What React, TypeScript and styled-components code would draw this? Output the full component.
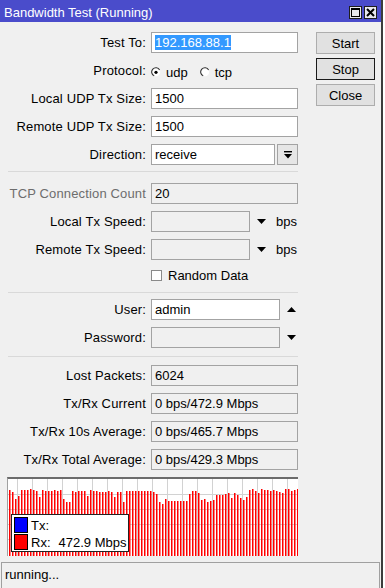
import React from 'react'
import styled, { createGlobalStyle } from 'styled-components'

const GlobalStyle = createGlobalStyle`
  html, body {
    margin: 0;
    padding: 0;
    background: #ffffff;
  }
  body {
    font-family: "Liberation Sans", Arial, sans-serif;
    font-size: 13px;
    color: #000;
  }
`

const Window = styled.div`
  width: 381px;
  height: 588px;
  border-right: 2px solid #3c3c3c;
  background: #f0f0f0;
  display: flex;
  flex-direction: column;
  overflow: hidden;
`

const TitleBar = styled.div`
  height: 22px;
  flex: none;
  background: #4a4ccb;
  color: #fff;
  display: flex;
  align-items: center;
  justify-content: space-between;
  padding: 0 4px 0 4px;
`

const Title = styled.span`
  font-size: 13px;
  line-height: 15px;
  padding-top: 3px;
`

const TitleButtons = styled.div`
  display: flex;
  gap: 2px;
  padding-top: 2px;
`

const TitleButton = styled.div`
  width: 13px;
  height: 13px;
  box-sizing: border-box;
  border: 1px solid #1e1e1e;
  background: #e8e8ee;
  display: flex;
  align-items: center;
  justify-content: center;
`

const Main = styled.div`
  display: flex;
  padding-top: 10px;
  gap: 18px;
`

const Form = styled.div`
  width: 298px;
  display: flex;
  flex-direction: column;
`

const Section = styled.div`
  display: flex;
  flex-direction: column;
  gap: 7px;
`

const Row = styled.div<{ $h?: number }>`
  display: grid;
  grid-template-columns: 146px 1fr;
  column-gap: 5px;
  align-items: center;
  height: ${p => p.$h ?? 21}px;
`

const Label = styled.span<{ $disabled?: boolean }>`
  text-align: right;
  white-space: nowrap;
  letter-spacing: 0.15px;
  color: ${p => (p.$disabled ? '#6d6d6d' : '#000')};
`

const Control = styled.div`
  display: flex;
  align-items: center;
  height: 100%;
`

const Field = styled.div<{ $w?: number; $ro?: boolean }>`
  box-sizing: border-box;
  width: ${p => p.$w ?? 147}px;
  height: 21px;
  border: 1px solid #a3a3a3;
  background: ${p => (p.$ro ? '#f0f0f0' : '#ffffff')};
  padding: 0 3px;
  line-height: 19px;
  white-space: nowrap;
  overflow: hidden;
`

const Selected = styled.span`
  background: #3399ff;
  color: #fff;
`

const DropButton = styled.div`
  box-sizing: border-box;
  width: 21px;
  height: 21px;
  margin-left: 2px;
  border: 1px solid #a3a3a3;
  background: #e6e6e6;
  display: flex;
  align-items: center;
  justify-content: center;
`

const Unit = styled.span`
  margin-left: 10px;
`

const RadioGroup = styled.div`
  display: flex;
  align-items: center;
  padding-top: 3px;
`

const RadioItem = styled.label`
  display: flex;
  align-items: center;
  gap: 5px;
  margin-right: 12px;
`

const CheckItem = styled.label`
  display: flex;
  align-items: center;
  gap: 6px;
`

const CheckBox = styled.span`
  box-sizing: border-box;
  width: 11px;
  height: 11px;
  border: 1px solid #8a8a8a;
  background: #fff;
`

const Separator = styled.div<{ $mt: number; $mb: number }>`
  height: 1px;
  background: #d9d9d9;
  margin: ${p => p.$mt}px 0 ${p => p.$mb}px 8px;
  width: 290px;
`

const GraphBox = styled.div`
  position: relative;
  margin: 7px 0 0 7px;
  width: 290px;
  height: 77px;
  border-left: 1px solid #a0a0a0;
  border-top: 2px solid #6b6b6b;
  background: #fff;
`

const Legend = styled.div`
  position: absolute;
  left: 3px;
  top: 35px;
  width: 118px;
  box-sizing: border-box;
  border: 1px solid #222;
  background: #fff;
  padding: 2px 2px 1px 2px;
  display: flex;
  flex-direction: column;
  gap: 1px;
`

const LegendRow = styled.div`
  display: flex;
  align-items: center;
  height: 16px;
  gap: 3px;
  font-size: 13px;
  white-space: nowrap;
`

const Swatch = styled.span<{ $color: string }>`
  box-sizing: border-box;
  flex: none;
  width: 14px;
  height: 16px;
  border: 1px solid #000;
  background: ${p => p.$color};
`

const LegendValue = styled.span`
  margin-left: 5px;
`

const Buttons = styled.div`
  display: flex;
  flex-direction: column;
  gap: 4px;
`

const Button = styled.div<{ $default?: boolean }>`
  box-sizing: border-box;
  width: 59px;
  height: 22px;
  border: 1px solid ${p => (p.$default ? '#1a1a1a' : '#adadad')};
  background: #e1e1e1;
  display: flex;
  align-items: center;
  justify-content: center;
`

const StatusBar = styled.div`
  margin: 6px 1px 0 1px;
  flex: 1;
  border: 1px solid #a0a0a0;
  border-bottom: none;
  padding: 4px 3px 0 3px;
`

const Caret = ({ up }: { up?: boolean }) => (
  <svg width="9" height="6" viewBox="0 0 9 6" style={{ marginLeft: 7 }}>
    <polygon points={up ? '0,5 9,5 4.5,0' : '0,0 9,0 4.5,5'} fill="#000" />
  </svg>
)

const Radio = ({ checked }: { checked?: boolean }) => (
  <svg width="10" height="10" viewBox="0 0 10 10">
    <circle cx="5" cy="5" r="4.2" fill="#fff" />
    <path d="M8.6 3 A4.2 4.2 0 1 0 3.2 8.8" fill="none" stroke="#333" strokeWidth="1.1" />
    {checked && <circle cx="5" cy="5.3" r="1.6" fill="#000" />}
  </svg>
)

const bars = [
  15, 17, 24, 21, 15, 15, 15, 14, 15, 16,
  22, 15, 16, 16, 16, 15, 16, 15, 24, 27,
  27, 16, 17, 16, 16, 16, 21, 15, 16, 16,
  17, 17, 17, 16, 17, 22, 17, 17, 27, 16,
  16, 16, 16, 16, 16, 16, 16, 16, 17, 19,
  27, 29, 24, 26, 26, 26, 26, 26, 26, 26,
  19, 16, 16, 18, 25, 24, 27, 26, 25, 20,
  20, 20, 19, 18, 23, 18, 20, 23, 25, 22,
  15, 14, 16, 18, 14, 15, 15, 16, 15, 16,
  17, 18, 14, 14, 16, 15, 14,
]

const Graph = () => (
  <svg width="290" height="77" viewBox="0 0 290 77">
    {Array.from({ length: 20 }).map((_, i) => (
      <line key={'v' + i} x1={9.5 + i * 15} y1="0" x2={9.5 + i * 15} y2="77" stroke="#d2d2d2" />
    ))}
    {[15.5, 30.5, 45.5, 60.5].map(y => (
      <line key={'h' + y} x1="0" y1={y} x2="290" y2={y} stroke="#d2d2d2" />
    ))}
    {bars.map((o, i) => (
      <rect key={i} x={1 + i * 3} y={o - 4} width="1.5" height={77 - (o - 4)} fill="#ff0000" />
    ))}
  </svg>
)

const App: React.FC = () => {
  return (
    <Window>
      <GlobalStyle />
      <TitleBar>
        <Title>Bandwidth Test (Running)</Title>
        <TitleButtons>
          <TitleButton>
            <svg width="9" height="9" viewBox="0 0 9 9">
              <rect x="0.5" y="0.5" width="8" height="8" fill="none" stroke="#000" />
              <line x1="0" y1="1.5" x2="9" y2="1.5" stroke="#000" />
            </svg>
          </TitleButton>
          <TitleButton>
            <svg width="9" height="9" viewBox="0 0 9 9">
              <path d="M1 1 L8 8 M8 1 L1 8" stroke="#000" strokeWidth="2" />
            </svg>
          </TitleButton>
        </TitleButtons>
      </TitleBar>

      <Main>
        <Form>
          <Section>
            <Row>
              <Label>Test To:</Label>
              <Control>
                <Field><Selected>192.168.88.1</Selected></Field>
              </Control>
            </Row>
            <Row>
              <Label>Protocol:</Label>
              <RadioGroup>
                <RadioItem><Radio checked />udp</RadioItem>
                <RadioItem><Radio />tcp</RadioItem>
              </RadioGroup>
            </Row>
            <Row>
              <Label>Local UDP Tx Size:</Label>
              <Control><Field>1500</Field></Control>
            </Row>
            <Row>
              <Label>Remote UDP Tx Size:</Label>
              <Control><Field>1500</Field></Control>
            </Row>
            <Row>
              <Label>Direction:</Label>
              <Control>
                <Field $w={124}>receive</Field>
                <DropButton>
                  <svg width="8" height="8" viewBox="0 0 8 8">
                    <rect x="0" y="0" width="8" height="1.4" fill="#000" />
                    <polygon points="0,3 8,3 4,7.5" fill="#000" />
                  </svg>
                </DropButton>
              </Control>
            </Row>
          </Section>

          <Separator $mt={6} $mb={11} />

          <Section>
            <Row>
              <Label $disabled>TCP Connection Count</Label>
              <Control><Field $ro>20</Field></Control>
            </Row>
            <Row>
              <Label>Local Tx Speed:</Label>
              <Control>
                <Field $w={99} $ro />
                <Caret />
                <Unit>bps</Unit>
              </Control>
            </Row>
            <Row>
              <Label>Remote Tx Speed:</Label>
              <Control>
                <Field $w={99} $ro />
                <Caret />
                <Unit>bps</Unit>
              </Control>
            </Row>
            <Row $h={16}>
              <span />
              <CheckItem><CheckBox />Random Data</CheckItem>
            </Row>
          </Section>

          <Separator $mt={9} $mb={6} />

          <Section>
            <Row>
              <Label>User:</Label>
              <Control>
                <Field $w={129}>admin</Field>
                <Caret up />
              </Control>
            </Row>
            <Row>
              <Label>Password:</Label>
              <Control>
                <Field $w={129} $ro />
                <Caret />
              </Control>
            </Row>
          </Section>

          <Separator $mt={8} $mb={8} />

          <Section>
            <Row>
              <Label>Lost Packets:</Label>
              <Control><Field $ro>6024</Field></Control>
            </Row>
            <Row>
              <Label>Tx/Rx Current</Label>
              <Control><Field $ro>0 bps/472.9 Mbps</Field></Control>
            </Row>
            <Row>
              <Label>Tx/Rx 10s Average:</Label>
              <Control><Field $ro>0 bps/465.7 Mbps</Field></Control>
            </Row>
            <Row>
              <Label>Tx/Rx Total Average:</Label>
              <Control><Field $ro>0 bps/429.3 Mbps</Field></Control>
            </Row>
          </Section>

          <GraphBox>
            <Graph />
            <Legend>
              <LegendRow><Swatch $color="#0000ff" />Tx:</LegendRow>
              <LegendRow><Swatch $color="#ff0000" />Rx:<LegendValue>472.9 Mbps</LegendValue></LegendRow>
            </Legend>
          </GraphBox>
        </Form>

        <Buttons>
          <Button>Start</Button>
          <Button $default>Stop</Button>
          <Button>Close</Button>
        </Buttons>
      </Main>

      <StatusBar>running...</StatusBar>
    </Window>
  )
}

export default App
